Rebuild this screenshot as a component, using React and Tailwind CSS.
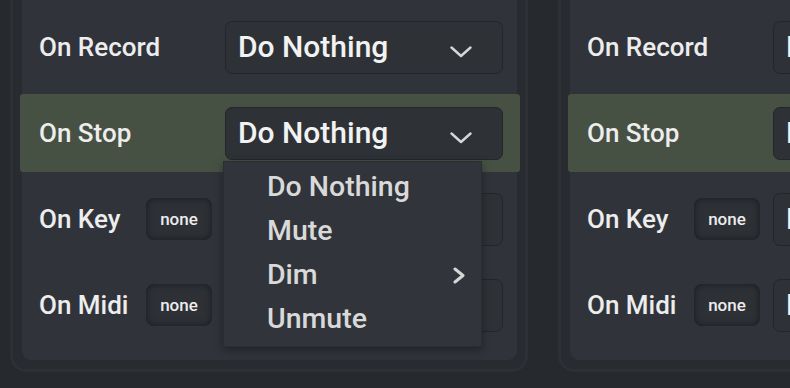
import React from 'react';

const MENU_ITEMS = ['Do Nothing', 'Mute', 'Dim', 'Unmute'];

function ChevronDown() {
  return (
    <svg width="22" height="12" viewBox="0 0 22 12" className="mt-[10px] shrink-0">
      <polyline points="1.5,1.5 11,10 20.5,1.5" fill="none" stroke="#d6d6d6" strokeWidth="2.4" strokeLinecap="round" strokeLinejoin="round" />
    </svg>
  );
}

function ChevronRight() {
  return (
    <svg width="14" height="17" viewBox="0 0 14 17" className="shrink-0">
      <polyline points="3,2 11,8.5 3,15" fill="none" stroke="#d6d6d6" strokeWidth="3" strokeLinecap="round" strokeLinejoin="round" />
    </svg>
  );
}

function Select({ value, open }) {
  return (
    <div className="relative w-[278px] h-[53px] shrink-0">
      <div className="w-full h-full flex items-center justify-between pl-[12px] pr-[30px] rounded-[7px] border border-[#23262a] bg-[#2e3237]">
        <span className="text-[30px] font-medium leading-none text-[#f2f2f2] whitespace-nowrap">{value}</span>
        <ChevronDown />
      </div>
      {open && (
        <div className="absolute left-[-2px] top-[54px] w-[259px] z-10 py-[4px] bg-[#31353b] border border-[#2a2d32] shadow-[0_3px_8px_rgba(0,0,0,0.35)]">
          {MENU_ITEMS.map((item) => (
            <div key={item} className="h-[44px] flex items-center justify-between pl-[43px] pr-[15px]">
              <span className="text-[28.5px] font-medium leading-none text-[#d9d9d9] whitespace-nowrap">{item}</span>
              {item === 'Dim' && <ChevronRight />}
            </div>
          ))}
        </div>
      )}
    </div>
  );
}

function Row({ label, badge, active, open }) {
  return (
    <div className={`h-[78px] flex items-center pl-[19px] rounded-[3px] ${active ? 'bg-[#465043]' : ''}`}>
      <div className="w-[186px] pr-[13px] flex items-center justify-between shrink-0">
        <span className="text-[26px] font-medium leading-none text-[#ededed] whitespace-nowrap">{label}</span>
        {badge && (
          <div className="w-[66px] h-[42px] flex items-center justify-center rounded-[8px] bg-[#2d3136] shadow-[inset_0_0_7px_rgba(0,0,0,0.5)]">
            <span className="text-[17px] font-medium leading-none text-[#ececec]">{badge}</span>
          </div>
        )}
      </div>
      <Select value="Do Nothing" open={open} />
    </div>
  );
}

function Panel({ showMenu }) {
  return (
    <div className="w-[518px] shrink-0 rounded-[16px] bg-[#2d3136] p-[3px]">
      <div className="rounded-[13px] bg-[#282b2f] pt-[12px] pb-[9px] pl-[9px] pr-[8px]">
        <div className="rounded-[9px] bg-[#30343a] pt-[23px] pb-[16px]">
          <div className="ml-[-2px] mr-[-3px] flex flex-col gap-[8px]">
            <Row label="On Record" />
            <Row label="On Stop" active open={showMenu} />
            <Row label="On Key" badge="none" />
            <Row label="On Midi" badge="none" />
          </div>
        </div>
      </div>
    </div>
  );
}

export default function App() {
  return (
    <div className="w-[790px] h-[388px] overflow-hidden bg-[#26292d] font-['Roboto','DejaVu_Sans',sans-serif]">
      <div className="mt-[-30px] pl-[10px] flex gap-[30px]">
        <Panel showMenu />
        <Panel />
      </div>
    </div>
  );
}
